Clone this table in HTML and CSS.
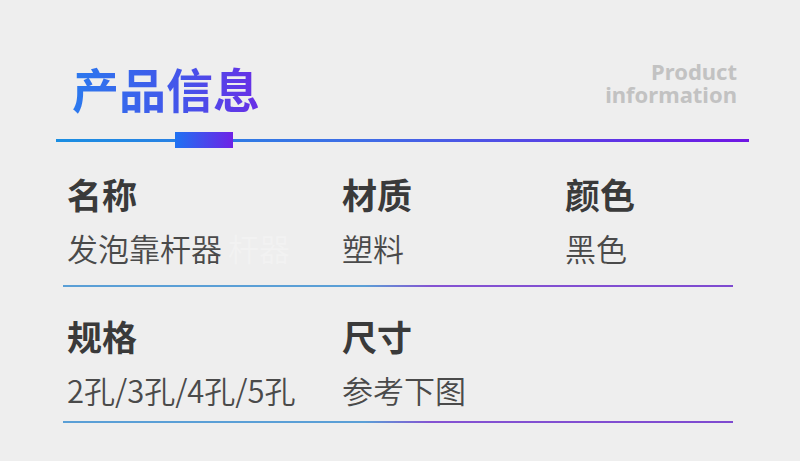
FILE: index.html
```html
<!DOCTYPE html>
<html lang="zh">
<head>
<meta charset="utf-8">
<link rel="stylesheet" href="styles.css">
</head>
<body>
<div class="page">
  <header class="head">
    <h1 class="title">产品信息</h1>
    <div class="en"><span class="en-line">Product</span><span class="en-line">information</span></div>
  </header>
  <div class="divider"><span class="divider-block"></span></div>
  <section class="row row-first">
    <div class="cell"><div class="label">名称</div><div class="value">发泡靠杆器<span class="ghost">杆器</span></div></div>
    <div class="cell"><div class="label">材质</div><div class="value">塑料</div></div>
    <div class="cell"><div class="label">颜色</div><div class="value">黑色</div></div>
  </section>
  <section class="row row-last">
    <div class="cell"><div class="label">规格</div><div class="value">2孔/3孔/4孔/5孔</div></div>
    <div class="cell"><div class="label">尺寸</div><div class="value">参考下图</div></div>
    <div class="cell"></div>
  </section>
</div>
</body>
</html>
```
FILE: styles.css
```css
html, body {
  margin: 0;
  padding: 0;
  background: #eeeeee;
}
body {
  width: 800px;
  height: 461px;
  overflow: hidden;
  font-family: "Noto Sans CJK SC", "Noto Sans", sans-serif;
}
.page {
  padding-top: 60px;
}
.head {
  display: flex;
  justify-content: space-between;
  align-items: flex-start;
  padding: 0 63px 0 72px;
  height: 66px;
}
.title {
  margin: 0;
  font-size: 47px;
  line-height: 56px;
  font-weight: 700;
  background: linear-gradient(90deg, #2b79ee 0%, #4553ea 60%, #6a2ee6 100%);
  -webkit-background-clip: text;
  background-clip: text;
  color: transparent;
}
.en {
  font-family: "Noto Sans", sans-serif;
  font-weight: 700;
  font-size: 22px;
  color: #c2c2c2;
  text-align: right;
}
.en-line {
  display: block;
  line-height: 23px;
  height: 23px;
}
.divider {
  position: relative;
  margin: 13px 51px 0 56px;
  height: 3px;
  background: linear-gradient(90deg, #1a8ee2 0%, #3f6ce6 45%, #7016e4 100%);
}
.divider-block {
  position: absolute;
  left: 119px;
  top: -7px;
  width: 58px;
  height: 16px;
  background: linear-gradient(90deg, #1f72f2 0%, #6e22e6 100%);
}
.row {
  display: grid;
  grid-template-columns: 275px 223px 1fr;
  margin: 0 67px 0 63px;
  padding: 27px 0 18px 4px;
  border-bottom: 2px solid transparent;
  border-image: linear-gradient(90deg, #5a9fd6 0%, #5a9fd6 45%, #8452d2 55%, #7e4ad0 100%) 1;
}
.row-first {
  padding-top: 30px;
}
.row-last {
  padding-bottom: 12px;
}
.label {
  font-size: 35px;
  line-height: 44px;
  font-weight: 700;
  color: #3a3a3a;
}
.value {
  margin-top: 13px;
  font-size: 31px;
  line-height: 38px;
  font-weight: 350;
  color: #4a4a4a;
  white-space: nowrap;
}
.ghost {
  color: #f2f2f2;
  margin-left: 6px;
}
```
